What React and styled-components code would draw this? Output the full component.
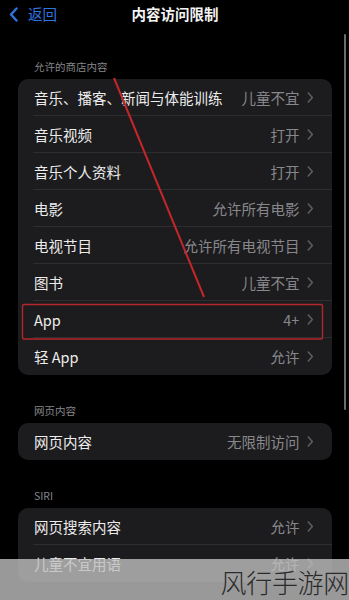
import React from "react";
import styled, { createGlobalStyle } from "styled-components";

const GlobalStyle = createGlobalStyle`
  html, body {
    margin: 0;
    padding: 0;
    background: #000;
  }
  body {
    font-family: Inter, "Noto Sans CJK SC", sans-serif;
  }
`;

const sections = [
  {
    title: "允许的商店内容",
    rows: [
      { label: "音乐、播客、新闻与体能训练", value: "儿童不宜" },
      { label: "音乐视频", value: "打开" },
      { label: "音乐个人资料", value: "打开" },
      { label: "电影", value: "允许所有电影" },
      { label: "电视节目", value: "允许所有电视节目" },
      { label: "图书", value: "儿童不宜" },
      { label: "App", value: "4+" },
      { label: "轻 App", value: "允许" },
    ],
  },
  {
    title: "网页内容",
    rows: [{ label: "网页内容", value: "无限制访问" }],
  },
  {
    title: "SIRI",
    rows: [
      { label: "网页搜索内容", value: "允许" },
      { label: "儿童不宜用语", value: "允许" },
    ],
  },
];

function Chevron({ color = "#5c5c60", size = 11 }) {
  return (
    <svg width={size * 0.6} height={size} viewBox="0 0 6 11" fill="none">
      <path
        d="M1 1l4 4.5L1 10"
        stroke={color}
        strokeWidth="1.6"
        strokeLinecap="round"
        strokeLinejoin="round"
      />
    </svg>
  );
}

export default function App() {
  return (
    <Screen>
      <GlobalStyle />
      <NavBar>
        <BackButton>
          <svg width="9" height="15" viewBox="0 0 9 15" fill="none">
            <path
              d="M7.5 1.5L2 7.5l5.5 6"
              stroke="#2f74e0"
              strokeWidth="2.4"
              strokeLinecap="round"
              strokeLinejoin="round"
            />
          </svg>
          <span>返回</span>
        </BackButton>
        <Title>内容访问限制</Title>
      </NavBar>

      <Content>
        {sections.map((s) => (
          <Section key={s.title}>
            <SectionHeader>{s.title}</SectionHeader>
            <Card>
              {s.rows.map((r, i) => (
                <Row key={r.label} $last={i === s.rows.length - 1}>
                  <Label>{r.label}</Label>
                  <Value>
                    <span>{r.value}</span>
                    <Chevron />
                  </Value>
                </Row>
              ))}
            </Card>
          </Section>
        ))}
      </Content>

      <ScrollThumb />

      <Annotation width="349" height="600" viewBox="0 0 349 600">
        <line x1="114" y1="78" x2="204" y2="297" stroke="#c4262a" strokeWidth="2" />
        <rect x="22.5" y="304.5" width="300" height="34.5" rx="1.5" fill="none" stroke="#b3262b" strokeWidth="1.4" />
      </Annotation>

      <Watermark>
        <span>风行手游网</span>
      </Watermark>
    </Screen>
  );
}

const Screen = styled.div`
  position: relative;
  width: 349px;
  height: 600px;
  overflow: hidden;
  background: #000;
  color: #fff;
`;

const NavBar = styled.div`
  position: relative;
  height: 30px;
  display: flex;
  align-items: center;
  justify-content: center;
`;

const BackButton = styled.div`
  position: absolute;
  left: 9px;
  top: 6px;
  display: flex;
  align-items: center;
  gap: 10px;
  color: #2f74e0;
  font-size: 14.5px;
  line-height: 16px;

  span {
    font-family: "Noto Sans CJK SC", sans-serif;
  }
`;

const Title = styled.div`
  font-family: "Noto Sans CJK SC", sans-serif;
  font-size: 14.5px;
  font-weight: 600;
  color: #f4f4f4;
  margin-top: -3px;
  margin-left: 1px;
`;

const Content = styled.div`
  display: flex;
  flex-direction: column;
  padding: 0 17px 0 18px;
`;

const Section = styled.div`
  display: flex;
  flex-direction: column;
  gap: 5px;
  margin-top: 29px;

  &:first-child {
    margin-top: 30px;
  }
`;

const SectionHeader = styled.div`
  padding-left: 16px;
  font-family: "Noto Sans CJK SC", sans-serif;
  font-size: 10.5px;
  line-height: 14px;
  color: #86868a;
`;

const Card = styled.div`
  background: #1c1c1e;
  border-radius: 10px;
  overflow: hidden;
`;

const Row = styled.div`
  position: relative;
  height: 37px;
  display: flex;
  align-items: center;
  justify-content: space-between;
  padding: 0 18px 0 16px;

  &::after {
    content: "";
    display: ${(p) => (p.$last ? "none" : "block")};
    position: absolute;
    left: 15px;
    right: 0;
    bottom: 0;
    height: 1px;
    background: #2e2e31;
  }
`;

const Label = styled.span`
  font-family: "Noto Sans CJK SC", sans-serif;
  font-size: 14.5px;
  color: #ececec;
  white-space: nowrap;
`;

const Value = styled.span`
  display: flex;
  align-items: center;
  gap: 8px;
  font-family: "Noto Sans CJK SC", sans-serif;
  font-size: 14.5px;
  color: #88888c;
  white-space: nowrap;
`;

const ScrollThumb = styled.div`
  position: absolute;
  right: 3px;
  top: 34px;
  width: 2px;
  height: 376px;
  border-radius: 1px;
  background: #6b6b6d;
`;

const Annotation = styled.svg`
  position: absolute;
  left: 0;
  top: 0;
  pointer-events: none;
`;

const Watermark = styled.div`
  position: absolute;
  left: 0;
  right: 0;
  bottom: 0;
  height: 41px;
  background: rgba(191, 191, 191, 0.8);
  display: flex;
  align-items: center;
  justify-content: flex-end;

  span {
    font-family: "Noto Sans CJK SC", sans-serif;
    font-size: 26px;
    font-weight: 300;
    color: #2a2a2a;
    letter-spacing: -0.3px;
    margin-right: 0;
    margin-top: 4px;
  }
`;
